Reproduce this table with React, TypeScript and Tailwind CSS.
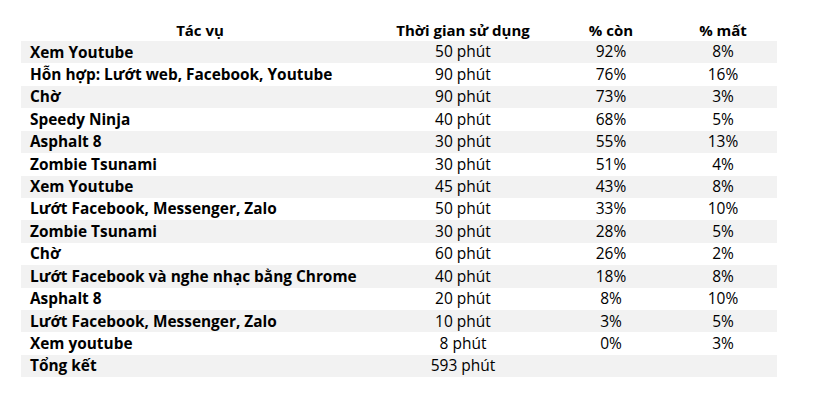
const rows: [string, string, string, string][] = [
  ["Xem Youtube", "50 phút", "92%", "8%"],
  ["Hỗn hợp: Lướt web, Facebook, Youtube", "90 phút", "76%", "16%"],
  ["Chờ", "90 phút", "73%", "3%"],
  ["Speedy Ninja", "40 phút", "68%", "5%"],
  ["Asphalt 8", "30 phút", "55%", "13%"],
  ["Zombie Tsunami", "30 phút", "51%", "4%"],
  ["Xem Youtube", "45 phút", "43%", "8%"],
  ["Lướt Facebook, Messenger, Zalo", "50 phút", "33%", "10%"],
  ["Zombie Tsunami", "30 phút", "28%", "5%"],
  ["Chờ", "60 phút", "26%", "2%"],
  ["Lướt Facebook và nghe nhạc bằng Chrome", "40 phút", "18%", "8%"],
  ["Asphalt 8", "20 phút", "8%", "10%"],
  ["Lướt Facebook, Messenger, Zalo", "10 phút", "3%", "5%"],
  ["Xem youtube", "8 phút", "0%", "3%"],
  ["Tổng kết", "593 phút", "", ""],
];

export default function App() {
  return (
    <div className="w-[813px] h-[405px] bg-white pt-[19px] pl-[21px] font-['Open_Sans',sans-serif] text-[15.5px] text-black">
      <table className="w-[756px] border-collapse">
        <thead>
          <tr className="h-[22px] text-[15px]">
            <th className="w-[358px] text-center font-bold leading-none">Tác vụ</th>
            <th className="w-[168px] text-center font-bold leading-none">Thời gian sử dụng</th>
            <th className="w-[128px] text-center font-bold leading-none">% còn</th>
            <th className="text-center font-bold leading-none pr-[6px]">% mất</th>
          </tr>
        </thead>
        <tbody>
          {rows.map((r, i) => (
            <tr key={i} className={`h-[22.43px] ${i % 2 === 0 ? "bg-[#f2f2f2]" : "bg-white"}`}>
              <td className="pl-[9px] font-bold leading-none text-[15.4px]">{r[0]}</td>
              <td className="text-center leading-none">{r[1]}</td>
              <td className="text-center leading-none">{r[2]}</td>
              <td className="text-center leading-none pr-[6px]">{r[3]}</td>
            </tr>
          ))}
        </tbody>
      </table>
    </div>
  );
}
